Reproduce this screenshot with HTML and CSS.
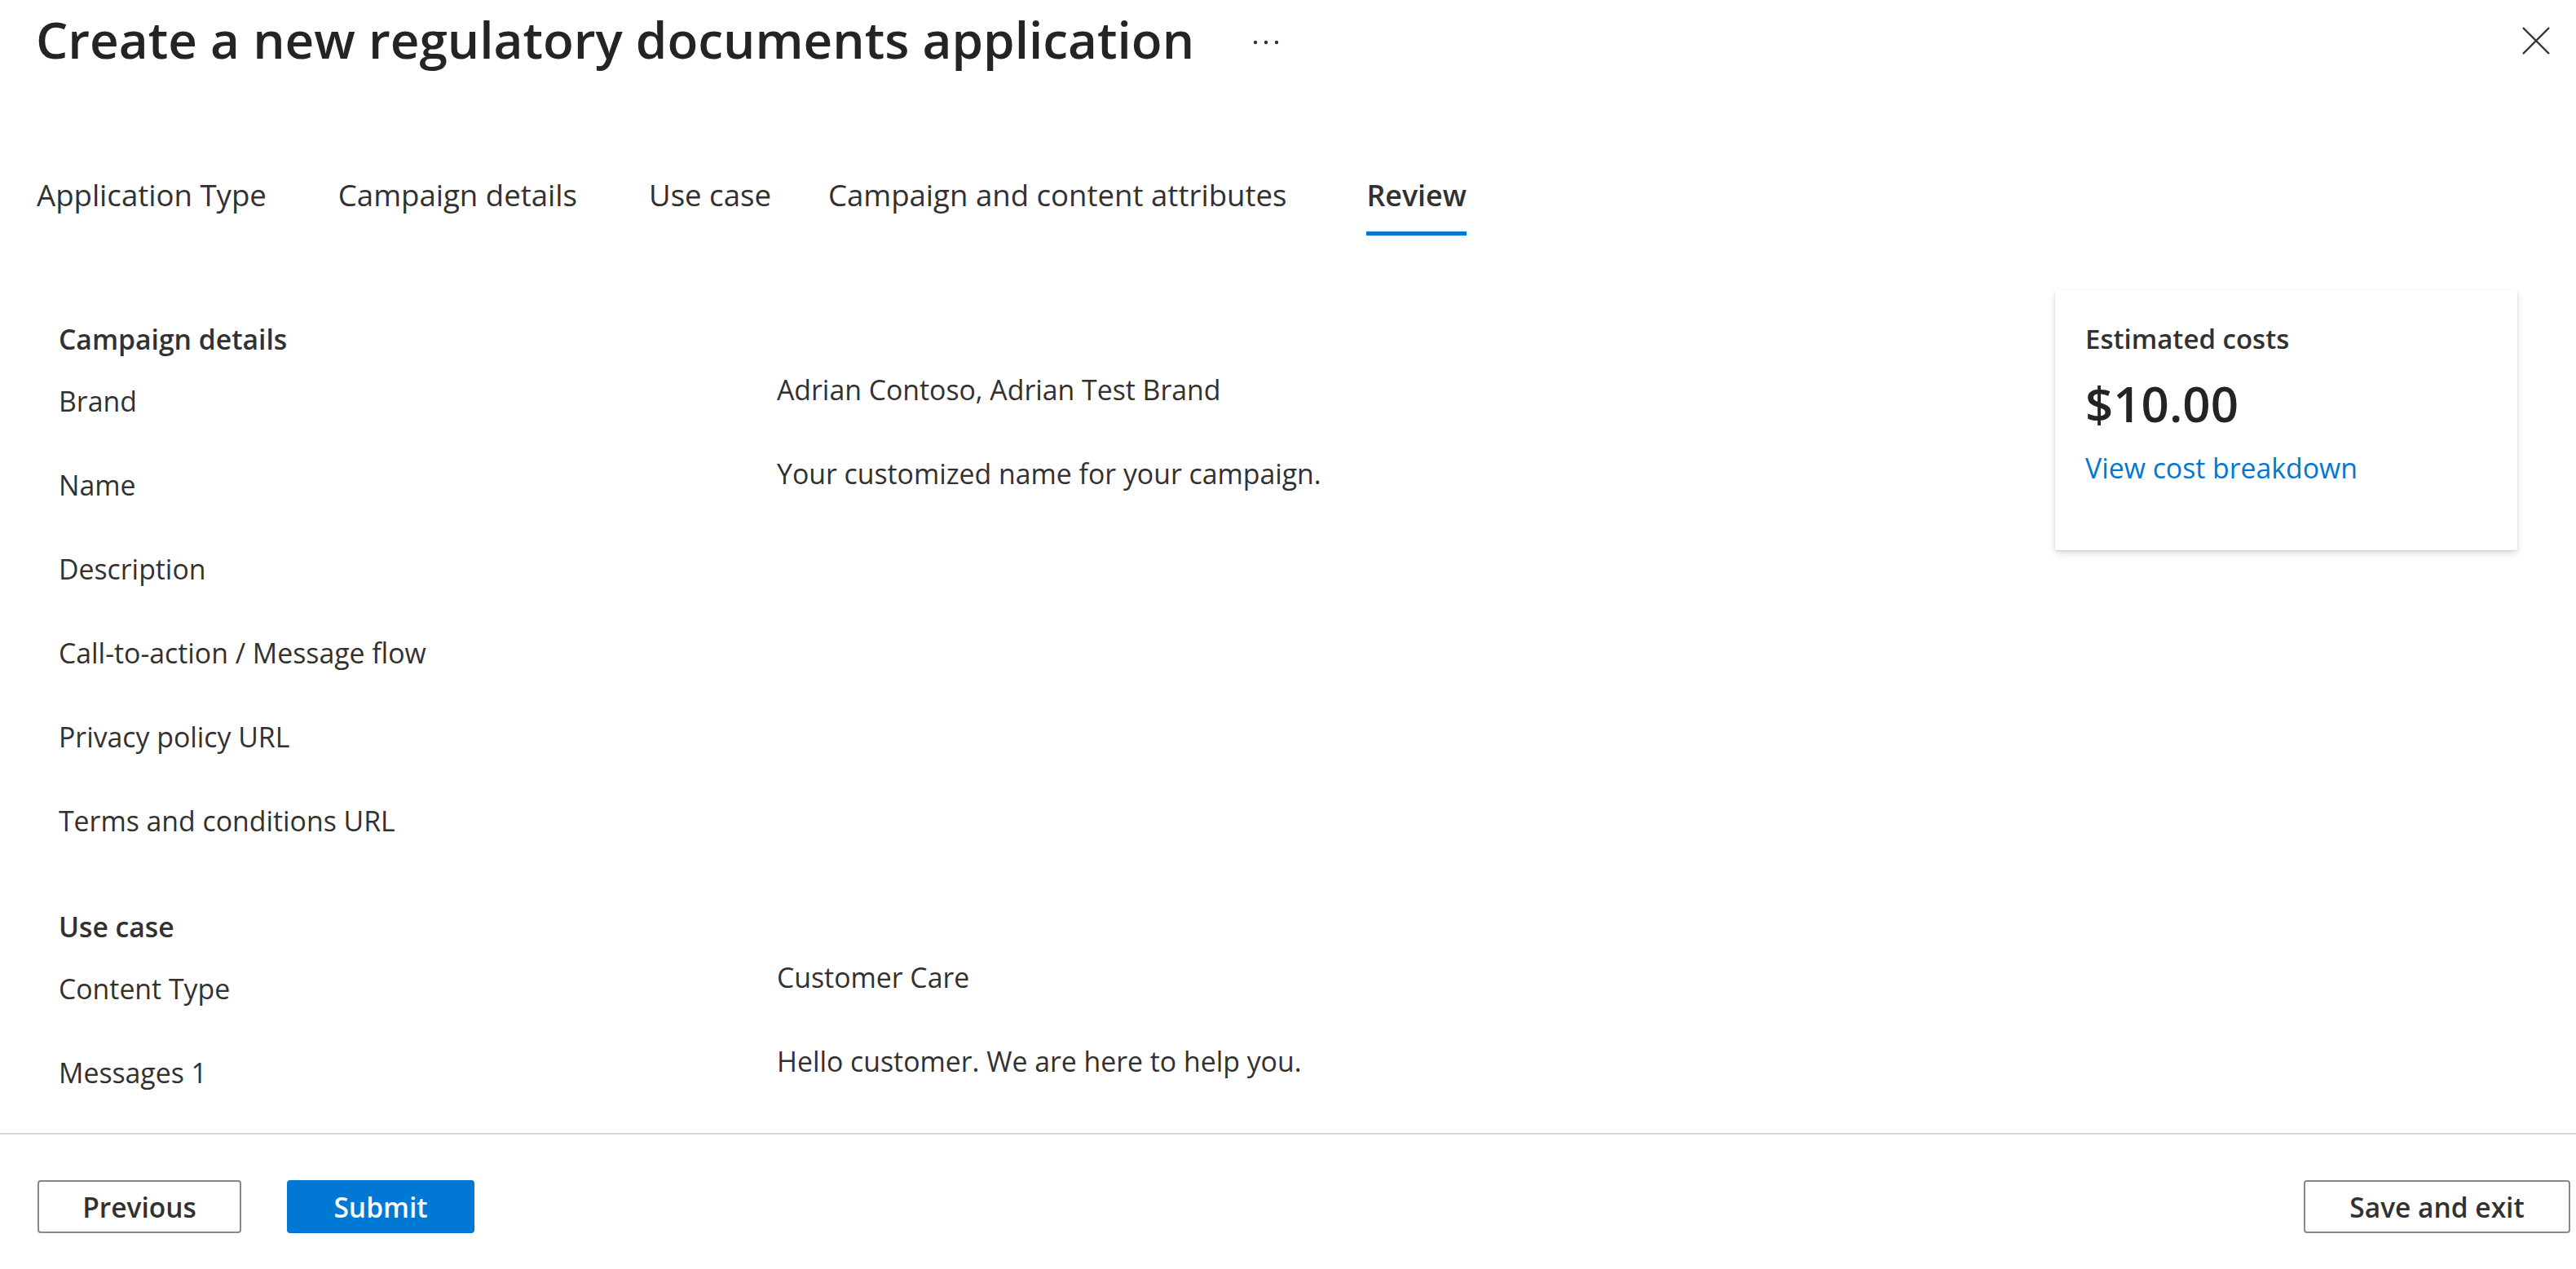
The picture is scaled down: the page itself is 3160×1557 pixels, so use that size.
FILE: index.html
```html
<!DOCTYPE html>
<html lang="en">
<head>
<meta charset="utf-8">
<title>Create a new regulatory documents application</title>
<link rel="stylesheet" href="styles.css">
</head>
<body>
<div class="page">
  <header class="header">
    <h1 class="title">Create a new regulatory documents application</h1>
    <button class="more" aria-label="More">
      <svg width="32" height="8" viewBox="0 0 32 8"><circle cx="3" cy="4" r="2.2"/><circle cx="16" cy="4" r="2.2"/><circle cx="29" cy="4" r="2.2"/></svg>
    </button>
    <span class="spacer"></span>
    <button class="close" aria-label="Close">
      <svg width="34" height="34" viewBox="0 0 34 34"><path d="M1 1 L33 33 M33 1 L1 33"/></svg>
    </button>
  </header>

  <nav class="tabs">
    <div class="tab">Application Type</div>
    <div class="tab">Campaign details</div>
    <div class="tab">Use case</div>
    <div class="tab tab-tight">Campaign and content attributes</div>
    <div class="tab active">Review</div>
  </nav>

  <div class="content">
    <main class="review">
      <section class="section">
        <h2 class="section-title">Campaign details</h2>
        <div class="row"><div class="label">Brand</div><div class="value">Adrian Contoso, Adrian Test Brand</div></div>
        <div class="row"><div class="label">Name</div><div class="value">Your customized name for your campaign.</div></div>
        <div class="row"><div class="label">Description</div><div class="value"></div></div>
        <div class="row"><div class="label">Call-to-action / Message flow</div><div class="value"></div></div>
        <div class="row"><div class="label">Privacy policy URL</div><div class="value"></div></div>
        <div class="row"><div class="label">Terms and conditions URL</div><div class="value"></div></div>
      </section>
      <section class="section">
        <h2 class="section-title">Use case</h2>
        <div class="row"><div class="label">Content Type</div><div class="value">Customer Care</div></div>
        <div class="row"><div class="label">Messages 1</div><div class="value">Hello customer. We are here to help you.</div></div>
      </section>
    </main>

    <aside class="cost-card">
      <div class="cost-title">Estimated costs</div>
      <div class="cost-amount">$10.00</div>
      <a class="cost-link" href="#">View cost breakdown</a>
    </aside>
  </div>

  <footer class="footer">
    <div class="footer-left">
      <button class="btn btn-default btn-prev">Previous</button>
      <button class="btn btn-primary btn-submit">Submit</button>
    </div>
    <button class="btn btn-default btn-save">Save and exit</button>
  </footer>
</div>
</body>
</html>
```

FILE: styles.css
```css
* { box-sizing: border-box; }

html, body {
  margin: 0;
  padding: 0;
  background: #ffffff;
}

body {
  font-family: "Open Sans", "Noto Sans", "Liberation Sans", sans-serif;
  color: #323130;
}

.page {
  width: 3160px;
  height: 1557px;
  display: flex;
  flex-direction: column;
  overflow: hidden;
}

/* Header */
.header {
  display: flex;
  align-items: center;
  height: 96px;
  padding: 0 32px 0 44px;
}

.title {
  margin: 0;
  font-size: 62px;
  font-weight: 600;
  line-height: 96px;
  color: #242424;
  white-space: nowrap;
}

.more, .close {
  background: none;
  border: none;
  padding: 0;
  display: flex;
  align-items: center;
  justify-content: center;
  cursor: pointer;
}

.more {
  margin-left: 72px;
  margin-top: 8px;
}

.more svg circle { fill: #323130; }

.spacer { flex: 1; }

.close {
  margin-top: 4px;
}

.close svg path {
  stroke: #323130;
  stroke-width: 2.4;
  fill: none;
}

/* Tabs */
.tabs {
  display: flex;
  gap: 88px;
  margin-top: 118px;
  padding-left: 45px;
}

.tab {
  font-size: 36.6px;
  line-height: 50px;
  padding-bottom: 20px;
  border-bottom: 5px solid transparent;
  white-space: nowrap;
  color: #323130;
}

.tab-tight {
  margin-left: -18px;
}

.tab.active {
  font-weight: 600;
  font-size: 35.8px;
  border-bottom-color: #0078d4;
  margin-left: 10px;
}

/* Content */
.content {
  flex: 1;
  display: flex;
  align-items: flex-start;
  padding: 67px 72px 0 72px;
  overflow: hidden;
}

.review {
  flex: 1;
  padding-top: 36px;
}

.section + .section {
  margin-top: 41px;
}

.section-title {
  margin: 0 0 14px 0;
  font-size: 33.7px;
  font-weight: 600;
  line-height: 48px;
}

.row {
  display: grid;
  grid-template-columns: 881px 1fr;
  height: 103px;
  font-size: 33.8px;
  line-height: 48px;
}

.label {
  padding-top: 14px;
}

.value {
  padding-top: 0;
}

/* Cost card */
.cost-card {
  width: 567px;
  height: 319px;
  padding: 36px 37px 0 37px;
  background: #ffffff;
  box-shadow: 0 4px 9px rgba(0, 0, 0, 0.13), 0 1px 2px rgba(0, 0, 0, 0.11);
  display: flex;
  flex-direction: column;
  align-items: flex-start;
}

.cost-title {
  font-size: 33px;
  font-weight: 600;
  line-height: 48px;
}

.cost-amount {
  margin-top: 15px;
  font-size: 60px;
  font-weight: 600;
  line-height: 80px;
  color: #242424;
}

.cost-link {
  margin-top: 15px;
  font-size: 33.8px;
  line-height: 48px;
  color: #0078d4;
  text-decoration: none;
}

/* Footer */
.footer {
  height: 167px;
  border-top: 2px solid #d6d6d6;
  display: flex;
  align-items: flex-start;
  justify-content: space-between;
  padding: 56px 7px 0 46px;
}

.footer-left {
  display: flex;
  gap: 56px;
}

.btn {
  height: 65px;
  border-radius: 4px;
  font-family: inherit;
  font-size: 33.5px;
  font-weight: 600;
  padding: 0;
  cursor: pointer;
}

.btn-default {
  background: #ffffff;
  border: 2px solid #8a8886;
  color: #323130;
}

.btn-primary {
  background: #0078d4;
  border: 2px solid #0078d4;
  color: #ffffff;
}

.btn-prev { width: 250px; }
.btn-submit { width: 230px; }
.btn-save { width: 327px; }
```
